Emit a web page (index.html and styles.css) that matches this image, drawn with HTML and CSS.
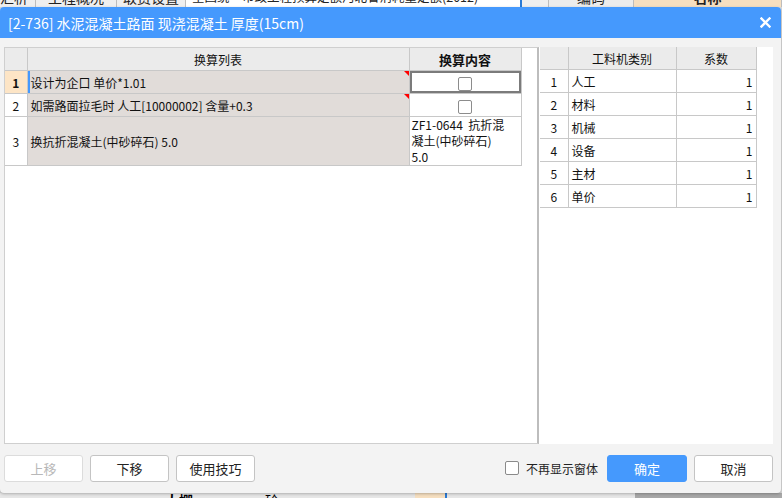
FILE: index.html
```html
<!DOCTYPE html>
<html lang="zh">
<head>
<meta charset="utf-8">
<link rel="stylesheet" href="styles.css">
</head>
<body>
<div class="app-top">
  <div class="tabs">
    <span class="tab t1">汇析</span>
    <span class="tab t2">工程概况</span>
    <span class="tab t3">取费设置</span>
    <span class="tab t4"><span class="t4txt">全国统一市政工程预算定额河北省消耗量定额(2012)</span><small>▼</small></span>
    <span class="tab t5"></span>
    <span class="tab t6">编码</span>
    <span class="tab t7">名称</span>
  </div>
</div>
<div class="dialog">
  <div class="titlebar">
    <span class="title">[2-736] 水泥混凝土路面 现浇混凝土 厚度(15cm)</span>
    <span class="close">
      <svg width="11" height="11" viewBox="0 0 11 11"><path d="M1.5 1.5 L9.5 9.5 M9.5 1.5 L1.5 9.5" stroke="#fff" stroke-width="2.4" stroke-linecap="square"/></svg>
    </span>
  </div>
  <div class="body">
    <div class="panels">
      <div class="panel-left">
        <table class="grid left">
          <colgroup><col class="c-num"><col class="c-text"><col class="c-content"></colgroup>
          <tr class="head">
            <th class="num"></th>
            <th>换算列表</th>
            <th class="hl">换算内容</th>
          </tr>
          <tr class="r1">
            <td class="num cur">1</td>
            <td class="txt focus-left"><span class="mark"></span>设计为企口 单价*1.01</td>
            <td class="chk focused"><span class="box"></span></td>
          </tr>
          <tr class="r1">
            <td class="num">2</td>
            <td class="txt"><span class="mark"></span>如需路面拉毛时 人工[10000002] 含量+0.3</td>
            <td class="chk"><span class="box"></span></td>
          </tr>
          <tr class="r3">
            <td class="num">3</td>
            <td class="txt">换抗折混凝土(中砂碎石) 5.0</td>
            <td class="content"><div class="ln">ZF1-0644&nbsp;&nbsp;抗折混</div><div class="ln">凝土(中砂碎石)</div><div class="ln">5.0</div></td>
          </tr>
        </table>
      </div>
      <div class="panel-right">
        <table class="grid right">
          <colgroup><col class="k-num"><col class="k-name"><col class="k-val"></colgroup>
          <tr class="head"><th></th><th>工料机类别</th><th>系数</th></tr>
          <tr><td class="num">1</td><td>人工</td><td class="val">1</td></tr>
          <tr><td class="num">2</td><td>材料</td><td class="val">1</td></tr>
          <tr><td class="num">3</td><td>机械</td><td class="val">1</td></tr>
          <tr><td class="num">4</td><td>设备</td><td class="val">1</td></tr>
          <tr><td class="num">5</td><td>主材</td><td class="val">1</td></tr>
          <tr><td class="num">6</td><td>单价</td><td class="val">1</td></tr>
        </table>
      </div>
    </div>
    <div class="footer">
      <button class="btn disabled">上移</button>
      <button class="btn">下移</button>
      <button class="btn">使用技巧</button>
      <span class="spacer"></span>
      <label class="noshow"><span class="cb"></span>不再显示窗体</label>
      <button class="btn primary">确定</button>
      <button class="btn">取消</button>
    </div>
  </div>
</div>
<div class="app-bottom">
  <span class="b1"></span><span class="b2">大棚</span><span class="b3">砼</span><span class="b5"></span><span class="b4"></span>
</div>
</body>
</html>
```
FILE: styles.css
```css
html, body {
  margin: 0;
  padding: 0;
  width: 782px;
  height: 498px;
  overflow: hidden;
  background: #d9d9d9;
  font-family: "Noto Sans CJK SC", "Microsoft YaHei", sans-serif;
}

.app-top {
  height: 7px;
  overflow: hidden;
  background: #f0f0f0;
}
.tabs {
  display: flex;
  height: 20px;
  margin-top: -13px;
  font-size: 14px;
  line-height: 20px;
  color: #222;
}
.tab {
  border-right: 1px solid #bdbdbd;
  text-align: center;
  white-space: nowrap;
  overflow: hidden;
  background: #efefef;
  flex-shrink: 0;
}
.t1 { width: 35px; text-align: left; }
.t2 { width: 80px; }
.t3 { width: 68px; }
.t4 {
  width: 336px;
  background: #fff;
  text-align: left;
  padding-left: 6px;
  border-right: 2px solid #2a7ad5;
  display: flex;
  box-sizing: border-box;
  font-size: 12.5px;
}
.t4txt { flex: 1; }
.t4 small { font-size: 9px; color: #555; margin-right: 8px; }
.t5 { width: 26px; }
.t6 { width: 84px; background: #ececec; }
.t7 { flex: 1; background: #f6dfc0; font-weight: bold; }

.dialog {
  width: 781px;
  height: 486px;
  background: #f3f3f3;
  border-radius: 4px;
  overflow: hidden;
  display: flex;
  flex-direction: column;
  box-shadow: 0 1px 3px rgba(0,0,0,0.25);
  position: relative;
  z-index: 1;
}

.titlebar {
  height: 31px;
  background: #4599fd;
  color: #fff;
  display: flex;
  align-items: center;
  padding-left: 8px;
  padding-right: 10px;
  flex-shrink: 0;
}
.title {
  font-size: 14px;
  flex: 1;
}
.close { display: flex; align-items: center; }

.body {
  flex: 1;
  display: flex;
  flex-direction: column;
  padding: 9px 8px 0 4px;
}

.panels {
  display: flex;
  height: 397px;
}
.panel-left {
  width: 532px;
  background: #fff;
  border: 1px solid #cfcfcf;
  border-right: 2px solid #bdbdbd;
  box-sizing: content-box;
  height: 395px;
}
.panel-right {
  flex: 1;
  background: #fff;
  padding-left: 1px;
}

.grid {
  border-collapse: collapse;
  table-layout: fixed;
  font-size: 12px;
  color: #111;
}
.grid th, .grid td {
  border: 1px solid #c8c8c8;
  padding: 0;
  height: 22px;
  font-weight: normal;
}
.grid tr.head th {
  background: #ebebeb;
  text-align: center;
  border-top: none;
}
.grid tr td:first-child, .grid tr th:first-child { border-left: none; }

.left { width: 516px; }
.c-num { width: 22px; }
.c-text { width: 382px; }
.c-content { width: 112px; }

.left th.hl {
  background: #fde6c8;
  font-weight: bold;
  font-size: 13px;
}
.left td.num {
  text-align: center;
  background: #fff;
}
.left td.num.cur {
  background: #fde5c6;
  font-weight: bold;
}
.left td.txt {
  background: #e1dcd9;
  padding-left: 3px;
  position: relative;
  white-space: nowrap;
}
.left td.focus-left {
  box-shadow: inset 2px 0 0 #4599fd;
}
.mark {
  position: absolute;
  right: 0;
  top: 0;
  width: 0;
  height: 0;
  border-top: 5px solid #ff0000;
  border-left: 5px solid transparent;
}
.left td.chk {
  text-align: center;
  background: #fff;
}
.left td.focused {
  box-shadow: inset 0 0 0 2px #7b7b7b, inset 0 2px 0 0 #4599fd;
}
.box {
  display: inline-block;
  width: 12px;
  height: 12px;
  border: 1px solid #8c8c8c;
  border-radius: 2px;
  vertical-align: middle;
  background: #fff;
}
.left tr.r3 td { height: 48px; }
.left td.content {
  background: #fff;
  padding: 0 2px;
  font-size: 12px;
  white-space: nowrap;
}
.ln {
  height: 16px;
  line-height: 16px;
}

.right { width: 216px; }
.k-num { width: 28px; }
.k-name { width: 108px; }
.k-val { width: 80px; }
.right td { background: #fff; padding-left: 3px; }
.right td.num { text-align: center; padding-left: 0; }
.right td.val { text-align: right; padding-right: 3px; }

.footer {
  display: flex;
  align-items: center;
  height: 48px;
  gap: 7px;
}
.btn {
  width: 79px;
  height: 27px;
  background: #fff;
  border: 1px solid #c4c4c4;
  border-radius: 3px;
  font-family: "Noto Sans CJK SC", sans-serif;
  font-size: 13px;
  color: #222;
  padding: 0;
}
.btn.disabled { color: #b8b8b8; border-color: #dcdcdc; }
.btn.primary {
  background: #4599fd;
  border-color: #4599fd;
  color: #fff;
  margin-left: 2px;
  width: 80px;
}
.spacer { flex: 1; }
.noshow {
  display: flex;
  align-items: center;
  font-size: 12px;
  color: #222;
  gap: 7px;
}
.cb {
  width: 12px;
  height: 12px;
  border: 1px solid #8a8a8a;
  border-radius: 2px;
  background: #fff;
}

.app-bottom {
  height: 5px;
  display: flex;
  overflow: hidden;
  background: #e6e6e6;
  font-size: 14px;
  line-height: 14px;
}
.b1 { width: 165px; }
.b2 { width: 100px; font-weight: bold; }
.b3 { width: 40px; }
.b5 { width: 30px; margin-left: 110px; background: #f6dfc0; border-right: 2px solid #2a7ad5; }
.b4 { flex: 1; background: #a8a8a8; margin-left: 188px; }
```
